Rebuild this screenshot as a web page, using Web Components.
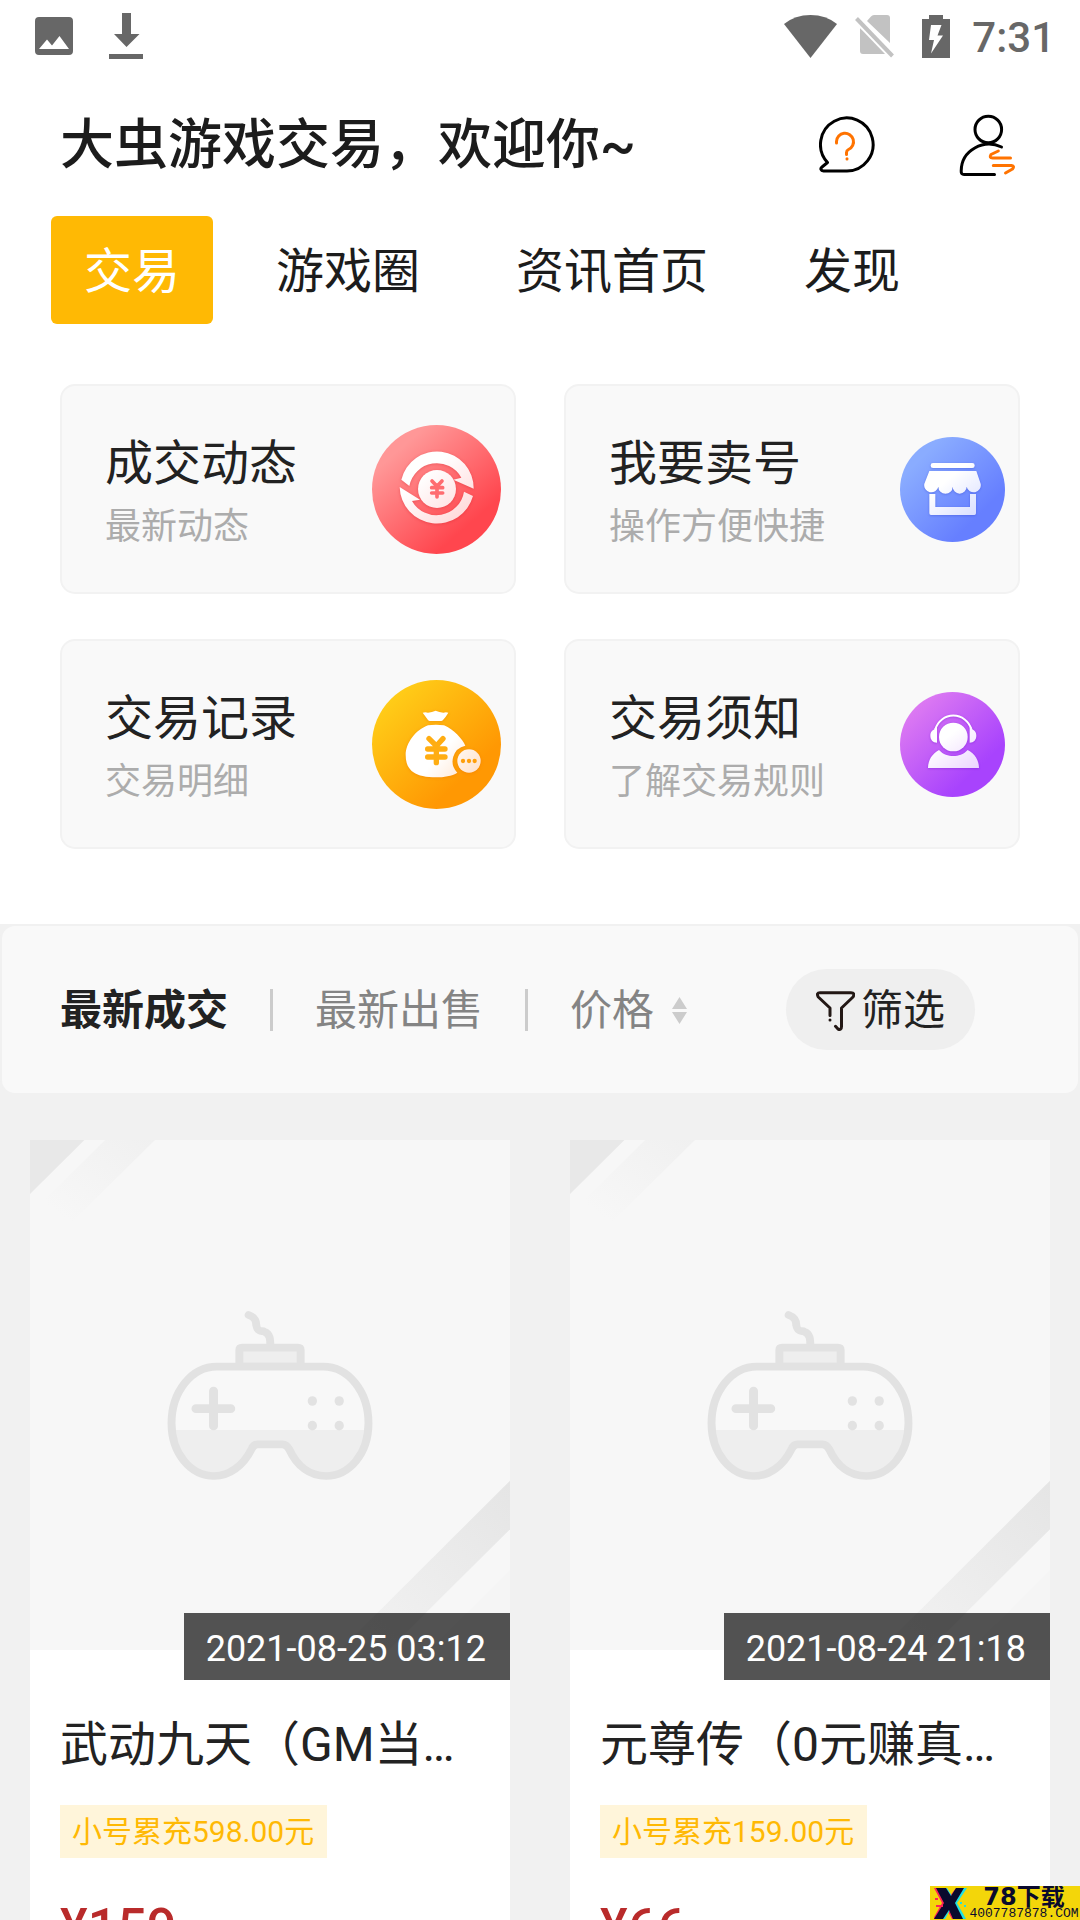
<!DOCTYPE html>
<html lang="zh-CN">
<head>
<meta charset="utf-8">
<meta name="viewport" content="width=device-width, initial-scale=1">
<title>大虫游戏交易</title>
<style>
  html, body { margin: 0; height: 100%; }
  body {
    background: #fff;
    color: #222;
    font-family: Roboto, "Noto Sans CJK SC", sans-serif;
    overflow: hidden;
  }
</style>
</head>
<body>
<trade-app></trade-app>

<script>
const BASE = `*{box-sizing:border-box}
a{color:inherit;text-decoration:none}
button{font:inherit;color:inherit;background:none;border:0;padding:0;margin:0;cursor:pointer}
svg{display:block;flex:none}`;

function define(name, html) {
  const tpl = document.createElement('template');
  tpl.innerHTML = html;
  customElements.define(name, class extends HTMLElement {
    constructor() {
      super();
      const root = this.attachShadow({ mode: 'open' });
      root.innerHTML = `<style>${BASE}</style>`;
      root.append(tpl.content.cloneNode(true));
    }
  });
}

/* Android status bar */
define('status-bar', `
<style>
:host{display:flex;align-items:center;justify-content:space-between;height:72px;padding:0 25px 0 35px;color:#676767}
.group{display:flex;align-items:center}
.left{gap:36px}
time{padding-top:4px;font-size:42px;line-height:48px;font-weight:500;margin-left:22px}
.sim{margin:0 27px 0 18px}
</style>
<div class="group left">
  <svg width="38" height="38" viewBox="0 0 38 38" fill="currentColor"><path fill-rule="evenodd" d="M4 0H34Q38 0 38 4V34Q38 38 34 38H4Q0 38 0 34V4Q0 0 4 0ZM4 32H34L24.500 19L17 28.500L12 22.500Z"/></svg>
  <svg width="34" height="46" viewBox="0 0 34 46" fill="currentColor"><path d="M13 0H22V21H30.500L17.500 34L5 21H13ZM0 41H34V46H0Z"/></svg>
</div>
<div class="group">
  <svg width="53" height="43" viewBox="0 0 53 43" fill="currentColor"><path d="M0 9Q11 0 26.500 0T53 9L26.500 43Z"/></svg>
  <svg class="sim" width="40" height="43" viewBox="0 0 40 43"><path fill="#c2c2c2" d="M12 6L16 1.500Q17 0 19 0H32Q35 0 35 3V28ZM5 13L35 38Q34 39 32 39H8Q5 39 5 36Z"/><path d="M1.500 3.500L37.500 41" stroke="#fff" stroke-width="8"/><path d="M1.500 3.500L37.500 41" stroke="#c2c2c2" stroke-width="4"/></svg>
  <svg width="28" height="43" viewBox="0 0 28 43"><path fill="currentColor" d="M7 0H21V4H28V43H0V4H7Z"/><path fill="#fff" d="M9 10H19.500L15.500 20.500H21L9 38.500L12 25H7Z"/></svg>
  <time>7:31</time>
</div>`);

/* Greeting and account shortcuts */
define('page-header', `
<style>
:host{display:flex;box-sizing:border-box;align-items:center;height:144px;padding:2px 63px 0 60px;gap:84px}
h1{flex:1;margin:0;padding-top:2px;font-size:54px;line-height:72px;font-weight:500;color:#1c1c1c;white-space:nowrap}
svg{fill:none;stroke:#000;stroke-width:3;stroke-linecap:round;stroke-linejoin:round}
.accent{stroke:#ff7300}
</style>
<h1><slot></slot></h1>
<button aria-label="帮助"><svg width="56" height="58" viewBox="0 0 56 58"><path d="M28 55H4.500C1.800 55 1 52.500 3 51L8.500 46.500A26.300 26.500 0 1 1 28 55"/><path class="accent" d="M17.500 27V25.500A8.500 8.500 0 1 1 29.500 33.500Q27.500 34.500 27.500 36.500V38.500M28 42.800V43"/></svg></button>
<button aria-label="切换账号"><svg width="58" height="63" viewBox="0 0 58 63"><circle cx="29.300" cy="15.500" r="13.300"/><path d="M42.500 33C25 24.500 2.200 36 2.200 57Q2 60.500 5 60.500H35.500"/><path class="accent" d="M39.300 37L32 40.500Q30 44 33.500 44H51.500M34.300 51.500H52.500Q56 52 53.500 55L46.500 59"/></svg></button>`);

/* Main tabs */
define('tab-nav', `
<style>
:host{display:flex;gap:30px;padding:0 51px}
</style><slot></slot>`);
define('tab-item', `
<style>
:host{display:block}
button{display:block;height:108px;padding:4px 33px 0;border-radius:6px;font-size:48px;line-height:104px;color:#1c1c1c;white-space:nowrap}
:host([active]) button{background:#ffb904;color:#fff}
</style><button role="tab"><slot></slot></button>`);

/* Entry card: title, hint and a round picture */
define('feature-card', `
<style>
:host{display:block}
a{display:flex;align-items:center;justify-content:space-between;height:210px;padding:0 13px 0 43px;border:2px solid #f2f2f2;border-radius:15px;background:#f9f9f9}
div{padding-top:4px}
strong,span{display:block;white-space:nowrap}
strong{font-size:48px;line-height:72px;font-weight:400;color:#222}
span{font-size:36px;line-height:54px;color:#acacac}
</style>
<a href="#"><div><strong><slot name="title"></slot></strong><span><slot name="hint"></slot></span></div><slot></slot></a>`);

/* Sort and filter bar */
define('sort-bar', `
<style>
:host{display:flex;align-items:center;gap:42px;height:171px;padding:0 103px 0 58px;border:2px solid #f1f1f1;border-radius:15px;background:#f9f9f9;font-size:42px;line-height:60px;color:#848484;white-space:nowrap}
button{padding-top:2px}
.on{font-weight:700;color:#222}
i{width:3px;height:42px;background:#ccc}
.price{display:flex;align-items:center;gap:18px}
.filter{display:flex;align-items:center;gap:6px;height:81px;padding:2px 30px 0;margin-left:auto;border-radius:41px;background:#efefef;color:#222}
</style>
<button class="on">最新成交</button><i></i>
<button>最新出售</button><i></i>
<button class="price">价格<svg width="15" height="27" viewBox="0 0 15 27" fill="#ccc"><path d="M7.500 0L15 12H0ZM0 15H15L7.500 27Z"/></svg></button>
<button class="filter"><svg width="39" height="40" viewBox="0 0 39 40" fill="none" stroke="#231815" stroke-width="3" stroke-linecap="round" stroke-linejoin="round"><path d="M14 24.500V17L2.300 6Q0 1.700 4 1.700H35Q39.500 1.700 37 6L25.500 17V35.500Q25.500 39.500 22 38L19.500 35.300M14 28.900V29.100"/></svg>筛选</button>`);

/* Listing card with the placeholder cover */
define('goods-card', `
<style>
:host{display:block;min-width:0}
a{display:block;background:#fff;min-height:840px}
.cover{position:relative}
.cover svg{width:100%;height:510px}
time{position:absolute;right:0;bottom:-30px;height:67px;padding:4px 24px 0 22px;background:rgba(0,0,0,.67);color:#fff;font-size:36px;line-height:64px;white-space:nowrap}
.info{padding:59px 30px 30px}
h2{margin:0;font-size:48px;line-height:72px;font-weight:400;color:#222;white-space:nowrap;overflow:hidden;text-overflow:ellipsis}
.tag{display:table;margin-top:24px;padding:1px 13px 0 12px;background:#fff5da;color:#ffb904;font-size:30px;line-height:52px;white-space:nowrap}
.price{margin:34px 0 0;font-size:52px;line-height:72px;font-weight:500;color:#b92b2b}
</style>
<a href="#">
<div class="cover">
<svg viewBox="87 60 1394 1530" preserveAspectRatio="none" aria-hidden="true">
  <defs>
    <linearGradient id="band" x1="1" y1="0" x2="0" y2="1"><stop offset="0" stop-color="#f0f0f0"/><stop offset=".85" stop-color="#f7f7f7"/></linearGradient>
    <linearGradient id="stripe" x1="1" y1="0" x2="0" y2="1"><stop offset="0" stop-color="#e5e5e5"/><stop offset="1" stop-color="#f3f3f3"/></linearGradient>
    <linearGradient id="pad" gradientUnits="userSpaceOnUse" x1="0" y1="740" x2="0" y2="1068"><stop offset=".579" stop-color="#f8f8f8"/><stop offset=".579" stop-color="#eee"/></linearGradient>
  </defs>
  <path fill="#f7f7f7" d="M87 60H1481V1590H87Z"/>
  <path fill="#e8e8e8" d="M87 60H245L87 222Z"/>
  <path fill="url(#band)" d="M305 60H450L200 315L115 255Z"/>
  <path fill="url(#stripe)" d="M1481 1082V1228L1128 1590H988Z"/>
  <path fill="#f5f5f5" d="M1481 1350V1590H1250Z"/>
  <g fill="none" stroke="#e2e2e2" stroke-width="23" stroke-linecap="round" stroke-linejoin="round">
    <path d="M722 585C740 592 744 602 744 615C748 640 760 630 768 635C784 642 785 656 785 680"/>
    <path fill="#eee" d="M695 740V690Q695 683 704 683H864Q873 683 873 690V740Z"/>
    <path fill="url(#pad)" d="M630 740H938C1012 740 1070 815 1070 910C1070 1000 1015 1068 947 1068C900 1068 862 1038 840 988Q832 973 820 973H748Q736 973 730 988C706 1038 665 1068 622 1068C553 1068 498 1000 498 910C498 815 556 740 630 740Z"/>
    <path stroke-width="26" d="M569 866H670M620 813V918"/>
  </g>
  <g fill="#e2e2e2"><ellipse cx="907" cy="843" rx="13.500" ry="14.500"/><ellipse cx="985" cy="843" rx="13.500" ry="14.500"/><ellipse cx="907" cy="917" rx="13.500" ry="14.500"/><ellipse cx="985" cy="917" rx="13.500" ry="14.500"/></g>
</svg>
<time><slot name="time"></slot></time>
</div>
<div class="info">
  <h2><slot name="name"></slot></h2>
  <span class="tag"><slot name="tag"></slot></span>
  <p class="price"><slot name="price"></slot></p>
</div>
</a>`);

/* Corner mark of the download site */
define('site-mark', `
<style>
:host{position:fixed;right:0;bottom:0;display:flex;box-sizing:border-box;align-items:center;width:150px;height:34px;padding:0 0 0 4px;background:#f3d60a;color:#0a0a2d;overflow:hidden}
.text{flex:1;display:flex;flex-direction:column;align-items:center;white-space:nowrap}
b{font-family:"DejaVu Sans","Noto Sans CJK SC",sans-serif;font-size:24px;line-height:22px;font-weight:700}
small{font-family:"Liberation Mono",monospace;font-size:13px;line-height:12px;font-weight:400}
</style>
<svg width="34" height="34" viewBox="0 0 34 34">
  <path fill="#ff2456" d="M0 2H10L16 10L22 2H28L19 17L26 33H18L13 24L8 33H-1L8 17Z"/>
  <path fill="#1ee0e6" d="M4 2H13L18 10L24 2H33L23 17L32 33H21L16 24L11 33H3L12 17Z"/>
  <path fill="#0a0a2d" d="M2 2H12L17 10L22 2H30L21 17L29 33H19L15 24L9 33H0L10 17Z"/>
  <path fill="#ff2456" d="M1 12H4V14H1ZM2 19H9V21H2Z"/><path fill="#1ee0e6" d="M26 16H28V18H26ZM30 19H32V21H30Z"/>
</svg>
<div class="text"><b>78下载</b><small>4007787878.COM</small></div>`);

/* Whole screen */
define('trade-app', `
<style>
:host{display:flex;flex-direction:column;height:100vh;overflow:hidden}
.features{display:grid;grid-template-columns:1fr 1fr;gap:45px 48px;padding:60px 60px 75px}
.market{flex:1;min-height:0;background:#f1f1f1;display:flex;flex-direction:column}
.list{flex:1;min-height:0;overflow:auto;scrollbar-width:none;display:grid;grid-template-columns:1fr 1fr;gap:45px 60px;padding:45px 30px}
</style>
<status-bar></status-bar>
<page-header>大虫游戏交易，欢迎你~</page-header>
<tab-nav role="tablist"><tab-item active>交易</tab-item><tab-item>游戏圈</tab-item><tab-item>资讯首页</tab-item><tab-item>发现</tab-item></tab-nav>
<div class="features">
  <feature-card>
    <span slot="title">成交动态</span><span slot="hint">最新动态</span>
    <svg width="129" height="129" viewBox="0 0 387 387" aria-hidden="true">
      <defs>
        <linearGradient id="red" x1=".2" y1=".2" x2=".72" y2=".8"><stop offset="0" stop-color="#ff9797"/><stop offset="1" stop-color="#ff464e"/></linearGradient>
        <linearGradient id="redInk" gradientUnits="userSpaceOnUse" x1="130" y1="120" x2="260" y2="270"><stop offset=".2" stop-color="#fff"/><stop offset="1" stop-color="#ffdcdd"/></linearGradient>
      </defs>
      <circle cx="193.500" cy="193.500" r="193.500" fill="url(#red)"/>
      <g fill="url(#redInk)" style="filter:drop-shadow(0 2px 4px rgba(200,20,30,.35))">
        <path d="M88 164A110 110 0 0 1 305 191L244 164L268 158A84 84 0 0 0 112 183Z"/>
        <path d="M303 213A112 112 0 0 1 83 186L144 224L120 228A84 84 0 0 0 276 200Z"/>
        <circle cx="195" cy="192" r="57"/>
      </g>
      <path d="M180 168L195 184L210 168M195 184V216M179 188H212M179 204H212" fill="none" stroke="#ff6c70" stroke-width="11" stroke-linecap="round"/>
    </svg>
  </feature-card>
  <feature-card>
    <span slot="title">我要卖号</span><span slot="hint">操作方便快捷</span>
    <svg width="105" height="105" viewBox="0 0 315 315" aria-hidden="true">
      <defs>
        <linearGradient id="blue" x1=".2" y1=".2" x2=".75" y2=".75"><stop offset="0" stop-color="#8aacff"/><stop offset="1" stop-color="#667fff"/></linearGradient>
        <linearGradient id="blueInk" gradientUnits="userSpaceOnUse" x1="100" y1="90" x2="220" y2="235"><stop offset=".3" stop-color="#fff"/><stop offset="1" stop-color="#dbe0ff"/></linearGradient>
      </defs>
      <circle cx="157.500" cy="157.500" r="157.500" fill="url(#blue)"/>
      <g fill="url(#blueInk)" style="filter:drop-shadow(0 2px 3px rgba(40,60,200,.4))">
        <rect x="92" y="78" width="132" height="15" rx="7"/>
        <path d="M88 102H229L242 140A21 21 0 0 1 200 149A21 21 0 0 1 158 149A21 21 0 0 1 115 149A21 21 0 0 1 73 140Z"/>
        <path d="M88 171H106V210H210V171H228V229Q228 234 223 234H93Q88 234 88 229Z"/>
      </g>
    </svg>
  </feature-card>
  <feature-card>
    <span slot="title">交易记录</span><span slot="hint">交易明细</span>
    <svg width="129" height="129" viewBox="0 0 387 387" aria-hidden="true">
      <defs>
        <linearGradient id="gold" x1=".15" y1=".15" x2=".72" y2=".75"><stop offset="0" stop-color="#ffcc18"/><stop offset="1" stop-color="#ff9803"/></linearGradient>
        <linearGradient id="goldInk" gradientUnits="userSpaceOnUse" x1="140" y1="150" x2="300" y2="290"><stop offset=".45" stop-color="#fff"/><stop offset="1" stop-color="#ffe3cd"/></linearGradient>
      </defs>
      <circle cx="193.500" cy="193.500" r="193.500" fill="url(#gold)"/>
      <g fill="url(#goldInk)" style="filter:drop-shadow(0 2px 4px rgba(230,110,0,.4))">
        <path d="M152 98Q160 95 168 98Q180 96 191 92Q202 96 214 98Q222 95 229 98Q222 110 213 120Q211 123 207 123H174Q170 123 168 120Z"/>
        <path d="M168 136Q191 132 216 136C245 148 272 178 280 197A48 48 0 0 0 256 278C240 288 215 292 193 292C130 292 101 272 101 225C101 190 130 150 168 136Z"/>
        <circle cx="291" cy="243" r="35"/>
      </g>
      <path d="M171 176L193 198L213 176M193 198V248M167 207H219M167 231H219" fill="none" stroke="#ffad12" stroke-width="16" stroke-linecap="round"/>
      <g fill="#ff9f0a"><circle cx="273" cy="243" r="6.500"/><circle cx="291" cy="243" r="6.500"/><circle cx="308" cy="243" r="6.500"/></g>
    </svg>
  </feature-card>
  <feature-card>
    <span slot="title">交易须知</span><span slot="hint">了解交易规则</span>
    <svg width="105" height="105" viewBox="0 0 315 315" aria-hidden="true">
      <defs>
        <linearGradient id="violet" x1=".15" y1=".15" x2=".72" y2=".75"><stop offset="0" stop-color="#dc79f2"/><stop offset="1" stop-color="#a843fd"/></linearGradient>
        <linearGradient id="violetInk" gradientUnits="userSpaceOnUse" x1="110" y1="90" x2="220" y2="235"><stop offset=".3" stop-color="#fff"/><stop offset="1" stop-color="#ecd6ff"/></linearGradient>
      </defs>
      <circle cx="157.500" cy="157.500" r="157.500" fill="url(#violet)"/>
      <g fill="url(#violetInk)" style="filter:drop-shadow(0 2px 3px rgba(110,20,200,.45))">
        <path d="M106 112A56 56 0 0 1 214 112" fill="none" stroke="#fff" stroke-width="6"/>
        <path d="M111 106V152C98 152 91 142 91 131C91 120 97 116 103 112L106 105Z"/>
        <path d="M209 106V152C222 152 229 142 229 131C229 120 223 116 217 112L214 105Z"/>
        <circle cx="160" cy="135" r="43"/>
        <path d="M84 228C84 205 97 184 117 174C130 188 145 192 160 192C175 192 190 188 203 174C225 185 237 205 237 228Z"/>
      </g>
    </svg>
  </feature-card>
</div>
<div class="market">
  <sort-bar></sort-bar>
  <div class="list">
    <goods-card><span slot="time">2021-08-25 03:12</span><span slot="name">武动九天（GM当…</span><span slot="tag">小号累充598.00元</span><span slot="price">¥159</span></goods-card>
    <goods-card><span slot="time">2021-08-24 21:18</span><span slot="name">元尊传（0元赚真…</span><span slot="tag">小号累充159.00元</span><span slot="price">¥66</span></goods-card>
  </div>
</div>
<site-mark></site-mark>`);
</script>
</body>
</html>
